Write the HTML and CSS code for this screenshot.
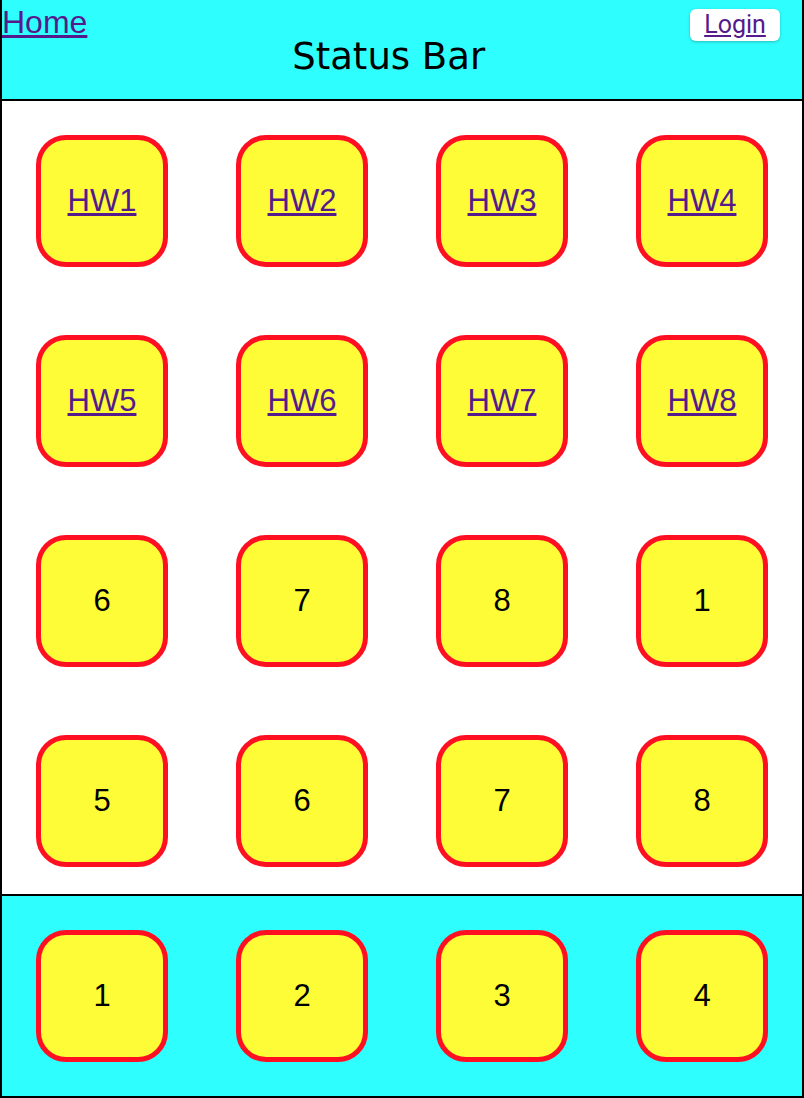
FILE: index.html
```html
<!DOCTYPE html>
<html>
<head>
<meta charset="utf-8">
<title>Status Bar</title>
<link rel="stylesheet" href="styles.css">
</head>
<body>
<div class="page">
  <header class="topbar">
    <a class="home" href="#">Home</a>
    <div class="title">Status Bar</div>
    <a class="login" href="#">Login</a>
  </header>
  <main class="grid">
    <div class="cell"><div class="tile"><a href="#">HW1</a></div></div>
    <div class="cell"><div class="tile"><a href="#">HW2</a></div></div>
    <div class="cell"><div class="tile"><a href="#">HW3</a></div></div>
    <div class="cell"><div class="tile"><a href="#">HW4</a></div></div>
    <div class="cell"><div class="tile"><a href="#">HW5</a></div></div>
    <div class="cell"><div class="tile"><a href="#">HW6</a></div></div>
    <div class="cell"><div class="tile"><a href="#">HW7</a></div></div>
    <div class="cell"><div class="tile"><a href="#">HW8</a></div></div>
    <div class="cell"><div class="tile">6</div></div>
    <div class="cell"><div class="tile">7</div></div>
    <div class="cell"><div class="tile">8</div></div>
    <div class="cell"><div class="tile">1</div></div>
    <div class="cell"><div class="tile">5</div></div>
    <div class="cell"><div class="tile">6</div></div>
    <div class="cell"><div class="tile">7</div></div>
    <div class="cell"><div class="tile">8</div></div>
  </main>
  <footer class="dock">
    <div class="cell"><div class="tile">1</div></div>
    <div class="cell"><div class="tile">2</div></div>
    <div class="cell"><div class="tile">3</div></div>
    <div class="cell"><div class="tile">4</div></div>
  </footer>
</div>
</body>
</html>
```

FILE: styles.css
```css
html, body {
  margin: 0;
  padding: 0;
}
body {
  font-family: "Liberation Sans", Arial, sans-serif;
  background: #ffffff;
}
.page {
  box-sizing: border-box;
  width: 804px;
  height: 1098px;
  border-left: 2px solid #000;
  border-right: 2px solid #000;
  border-bottom: 2px solid #000;
  display: flex;
  flex-direction: column;
  overflow: hidden;
}
.topbar {
  height: 99px;
  flex: none;
  background: #2ffefe;
  border-bottom: 2px solid #000;
  display: flex;
  align-items: flex-start;
}
.home {
  font-family: "Liberation Sans", Arial, sans-serif;
  font-size: 32px;
  line-height: 37px;
  margin-top: 4px;
  color: #551a8b;
  text-decoration: underline;
}
.title {
  flex: 1;
  text-align: center;
  font-family: "DejaVu Sans", sans-serif;
  font-size: 37px;
  line-height: 44px;
  margin-top: 35px;
  color: #000;
}
.login {
  margin-top: 9px;
  margin-right: 22px;
  width: 90px;
  height: 32px;
  box-sizing: border-box;
  background: #fff;
  border-radius: 6px;
  box-shadow: 0 1px 3px rgba(0, 0, 0, 0.25);
  font-family: Roboto, sans-serif;
  font-size: 25px;
  line-height: 32px;
  text-align: center;
  color: #551a8b;
  text-decoration: underline;
}
.grid {
  flex: 1;
  display: grid;
  grid-template-columns: repeat(4, 200px);
  grid-auto-rows: 200px;
  overflow: hidden;
}
.dock {
  flex: none;
  height: 200px;
  background: #2ffefe;
  border-top: 2px solid #000;
  display: grid;
  grid-template-columns: repeat(4, 200px);
}
.cell {
  display: flex;
  align-items: center;
  justify-content: center;
}
.tile {
  box-sizing: border-box;
  width: 132px;
  height: 132px;
  border: 5px solid #fe0f22;
  border-radius: 30px;
  background: #fdfc37;
  display: flex;
  align-items: center;
  justify-content: center;
  font-family: "Liberation Sans", Arial, sans-serif;
  font-size: 31px;
  color: #000;
}
.tile a {
  color: #551a8b;
  text-decoration: underline;
}
```
